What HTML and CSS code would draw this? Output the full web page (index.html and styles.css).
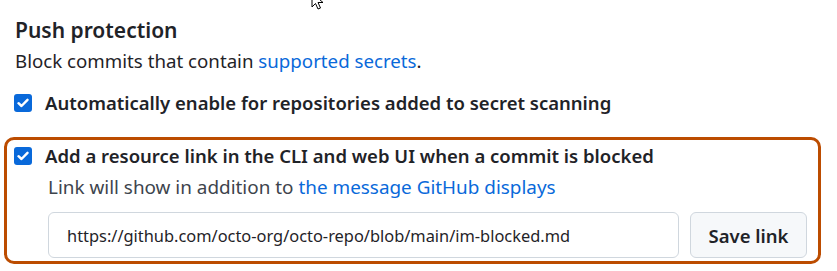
FILE: index.html
```html
<!DOCTYPE html>
<html lang="en">
<head>
<meta charset="utf-8">
<link rel="stylesheet" href="styles.css">
</head>
<body>
<div class="page">
  <svg class="cursor" width="14" height="20" viewBox="0 0 14 20"><path d="M1 1 L1 15 L4.5 11.5 L7 17 L9.5 16 L7 10.5 L12 10.5 Z" fill="#fff" stroke="#000" stroke-width="1"/></svg>
  <h2 class="title">Push protection</h2>
  <p class="desc">Block commits that contain <a class="link" href="#">supported secrets</a>.</p>
  <label class="check-row">
    <span class="checkbox"><svg width="12" height="10" viewBox="0 0 12 10"><path d="M1.5 5.2 L4.5 8 L10.5 1.8" fill="none" stroke="#fff" stroke-width="2.4" stroke-linecap="round" stroke-linejoin="round"/></svg></span>
    <span class="check-label">Automatically enable for repositories added to secret scanning</span>
  </label>
  <div class="highlight">
    <label class="check-row">
      <span class="checkbox"><svg width="12" height="10" viewBox="0 0 12 10"><path d="M1.5 5.2 L4.5 8 L10.5 1.8" fill="none" stroke="#fff" stroke-width="2.4" stroke-linecap="round" stroke-linejoin="round"/></svg></span>
      <span class="check-label">Add a resource link in the CLI and web UI when a commit is blocked</span>
    </label>
    <p class="note">Link will show in addition to <a class="link" href="#">the message GitHub displays</a></p>
    <div class="form-row">
      <div class="input">https://github.com/octo-org/octo-repo/blob/main/im-blocked.md</div>
      <button class="btn">Save link</button>
    </div>
  </div>
</div>
</body>
</html>
```
FILE: styles.css
```css
* { box-sizing: border-box; }
html, body { margin: 0; padding: 0; background: #fff; }
body {
  font-family: "Noto Sans", "Open Sans", sans-serif;
  color: #1f2328;
  width: 837px;
  height: 271px;
  overflow: hidden;
}
.page {
  position: relative;
  padding: 14px 0 0 4px;
}
.cursor {
  position: absolute;
  left: 311px;
  top: -8px;
}
.title {
  margin: 0 0 0 11px;
  font-size: 21px;
  font-weight: 600;
  line-height: 32px;
}
.desc {
  margin: 1px 0 0 11px;
  font-size: 18.7px;
  line-height: 28px;
}
.link { color: #0969da; text-decoration: none; }
.check-row {
  display: flex;
  align-items: center;
  gap: 13px;
  height: 24px;
}
.page > .check-row { margin: 16px 0 0 10px; }
.checkbox {
  width: 18px;
  height: 18px;
  border-radius: 3px;
  background: #0969da;
  display: flex;
  align-items: center;
  justify-content: center;
  flex: none;
}
.check-label {
  font-size: 18.5px;
  font-weight: 600;
  line-height: 24px;
}
.highlight {
  margin-top: 22px;
  width: 817px;
  height: 127px;
  border: 3px solid #bc4c00;
  border-radius: 10px;
  padding: 4px 0 0 7px;
}
.note {
  margin: 6px 0 0 34px;
  font-size: 18.9px;
  line-height: 26px;
  color: #3d444d;
}
.form-row {
  display: flex;
  gap: 11px;
  margin: 12px 0 0 34px;
}
.input {
  width: 631px;
  height: 46px;
  border: 1px solid #d0d7de;
  border-radius: 6px;
  padding: 0 18px;
  display: flex;
  align-items: center;
  font-size: 16.4px;
  color: #1f2328;
}
.btn {
  width: 117px;
  height: 46px;
  border: 1px solid #d0d7de;
  border-radius: 6px;
  background: #f6f8fa;
  font-family: inherit;
  font-size: 18.5px;
  font-weight: 600;
  color: #1f2328;
  padding: 0;
}
```
